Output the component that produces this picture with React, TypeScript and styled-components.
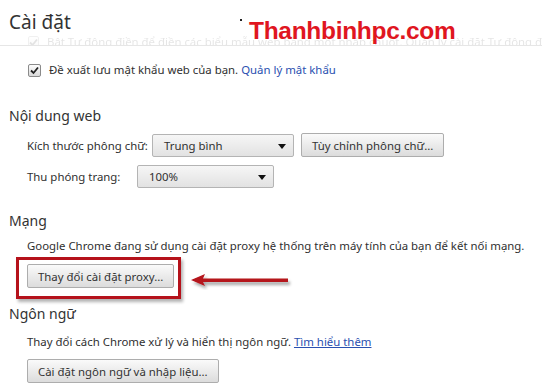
import React from 'react';
import styled, { createGlobalStyle } from 'styled-components';

const GlobalStyle = createGlobalStyle`
  html, body {
    margin: 0;
    padding: 0;
    background: #ffffff;
  }
  body {
    width: 542px;
    height: 392px;
    overflow: hidden;
    font-family: "Noto Sans", "Open Sans", sans-serif;
    font-size: 11.4px;
    color: #303030;
  }
`;

const Page = styled.div`
  position: relative;
  width: 542px;
  height: 392px;
  overflow: hidden;
`;

const Header = styled.div`
  height: 45px;
  border-bottom: 1px solid #e6e6e6;
  padding-left: 9px;
  overflow: hidden;
`;

const Title = styled.h1`
  margin: 0;
  padding-top: 9px;
  font-size: 19px;
  font-weight: 400;
  line-height: 26px;
  color: #333;
`;

const GhostRow = styled.div`
  display: flex;
  align-items: center;
  gap: 8px;
  padding-left: 19px;
  opacity: 0.12;
  white-space: nowrap;
  line-height: 14px;
`;

const Content = styled.div`
  padding: 0 0 0 9px;
`;

const Section = styled.section<{ top: number }>`
  margin-top: ${({ top }) => top}px;
`;

const SectionTitle = styled.h3`
  margin: 0;
  font-size: 14px;
  font-weight: 400;
  line-height: 20px;
  color: #333;
`;

const SectionBody = styled.div<{ indent?: number }>`
  padding-left: ${({ indent }) => indent ?? 18}px;
  display: flex;
  flex-direction: column;
  align-items: flex-start;
`;

const CheckRow = styled.label`
  display: flex;
  align-items: center;
  gap: 8px;
  line-height: 16px;
`;

const CheckBox = styled.span`
  width: 11px;
  height: 11px;
  border: 1px solid #8a8a8a;
  border-radius: 2px;
  background: linear-gradient(#fdfdfd, #d9d9d9);
  display: flex;
  align-items: center;
  justify-content: center;
`;

const Link = styled.a<{ underline?: boolean }>`
  color: #2a50b0;
  text-decoration: ${({ underline }) => (underline ? 'underline' : 'none')};
`;

const Text = styled.div<{ top?: number }>`
  margin-top: ${({ top }) => top ?? 0}px;
  line-height: 16px;
  white-space: nowrap;
`;

const FieldRow = styled.div<{ top: number }>`
  display: flex;
  align-items: center;
  gap: 7px;
  margin-top: ${({ top }) => top}px;
`;

const FieldLabel = styled.span<{ w: number }>`
  width: ${({ w }) => w}px;
  white-space: nowrap;
`;

const Select = styled.div<{ w: number }>`
  position: relative;
  box-sizing: border-box;
  width: ${({ w }) => w}px;
  height: 23px;
  border: 1px solid #b4b4b4;
  border-radius: 2px;
  background: linear-gradient(#f6f6f6, #e2e2e2);
  padding-left: 11px;
  display: flex;
  align-items: center;
  &::after {
    content: '';
    position: absolute;
    right: 7px;
    top: 9px;
    border-left: 4px solid transparent;
    border-right: 4px solid transparent;
    border-top: 5px solid #111;
  }
`;

const Button = styled.button`
  box-sizing: border-box;
  height: 24px;
  padding: 0 10px;
  border: 1px solid #adadad;
  border-radius: 2px;
  background: linear-gradient(#fafafa, #dcdcdc);
  font-family: inherit;
  font-size: 11.4px;
  color: #333;
  white-space: nowrap;
`;

const Highlight = styled.div`
  margin-left: -11px;
  margin-top: 3px;
  padding: 4px 4px 8px 8px;
  border: 3px solid #b5121b;
  box-shadow: 2px 3px 3px rgba(0, 0, 0, 0.3);
`;

const Watermark = styled.div`
  position: absolute;
  left: 249px;
  top: 16px;
  font-family: "Liberation Sans", Arial, sans-serif;
  font-weight: 700;
  font-size: 24.5px;
  line-height: 30px;
  color: #e0161f;
  letter-spacing: -0.3px;
`;

const Dot = styled.span`
  position: absolute;
  left: 240px;
  top: 19px;
  width: 2px;
  height: 2px;
  background: #222;
`;

const Arrow = styled.svg`
  position: absolute;
  left: 188px;
  top: 270px;
`;

export default function App() {
  return (
    <Page>
      <GlobalStyle />
      <Header>
        <Title>Cài đặt</Title>
        <GhostRow>
          <CheckBox>
            <svg width="9" height="9" viewBox="0 0 9 9">
              <path d="M1 4.5 L3.5 7 L8 1.5" stroke="#222" strokeWidth="1.8" fill="none" />
            </svg>
          </CheckBox>
          <span>
            Bật Tự động điền để điền các biểu mẫu web bằng một nhấp chuột. Quản lý cài đặt Tự động điền
          </span>
        </GhostRow>
      </Header>

      <Content>
        <SectionBody indent={19}>
          <CheckRow style={{ marginTop: 16 }}>
            <CheckBox>
              <svg width="9" height="9" viewBox="0 0 9 9">
                <path d="M1 4.5 L3.5 7 L8 1.5" stroke="#222" strokeWidth="1.8" fill="none" />
              </svg>
            </CheckBox>
            <span>
              Đề xuất lưu mật khẩu web của bạn. <Link>Quản lý mật khẩu</Link>
            </span>
          </CheckRow>
        </SectionBody>

        <Section top={28}>
          <SectionTitle>Nội dung web</SectionTitle>
          <SectionBody>
            <FieldRow top={7}>
              <FieldLabel w={118}>Kích thước phông chữ:</FieldLabel>
              <Select w={142}>Trung bình</Select>
              <Button>Tùy chỉnh phông chữ...</Button>
            </FieldRow>
            <FieldRow top={8}>
              <FieldLabel w={103}>Thu phóng trang:</FieldLabel>
              <Select w={137}>100%</Select>
            </FieldRow>
          </SectionBody>
        </Section>

        <Section top={23}>
          <SectionTitle>Mạng</SectionTitle>
          <SectionBody>
            <Text top={7}>
              Google Chrome đang sử dụng cài đặt proxy hệ thống trên máy tính của bạn để kết nối mạng.
            </Text>
            <Highlight>
              <Button>Thay đổi cài đặt proxy...</Button>
            </Highlight>
          </SectionBody>
        </Section>

        <Section top={5}>
          <SectionTitle>Ngôn ngữ</SectionTitle>
          <SectionBody>
            <Text top={10}>
              Thay đổi cách Chrome xử lý và hiển thị ngôn ngữ. <Link underline>Tìm hiểu thêm</Link>
            </Text>
            <Button style={{ marginTop: 9 }}>Cài đặt ngôn ngữ và nhập liệu...</Button>
          </SectionBody>
        </Section>
      </Content>

      <Dot />
      <Watermark>Thanhbinhpc.com</Watermark>
      <Arrow width="106" height="20" viewBox="0 0 106 20">
        <defs>
          <filter id="sh" x="-10%" y="-50%" width="130%" height="250%">
            <feDropShadow dx="2" dy="3" stdDeviation="1.5" floodColor="#000" floodOpacity="0.35" />
          </filter>
        </defs>
        <g filter="url(#sh)">
          <path d="M3 10 L17 4 L15 8.5 L100 8.5 L100 12 L15 12 L17 16 Z" fill="#b5121b" />
        </g>
      </Arrow>
    </Page>
  );
}
